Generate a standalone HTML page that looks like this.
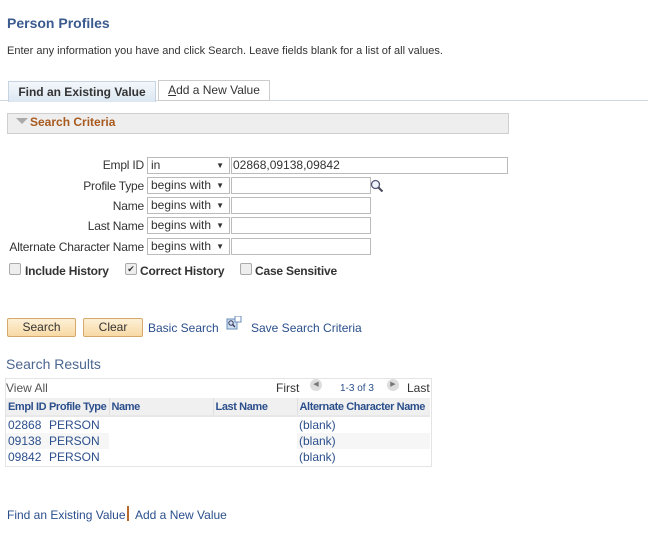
<!DOCTYPE html>
<html><head><meta charset="utf-8"><style>
body{margin:0;width:648px;height:534px;background:#fff;font-family:"Liberation Sans",Arial,sans-serif;position:relative;overflow:hidden;color:#333}
.a{position:absolute;white-space:nowrap}
.lbl{font-size:12px;color:#333;text-align:right;right:504px;letter-spacing:-0.2px}
.sel{position:absolute;left:147px;width:78px;height:15px;border:1px solid #bbb;background:#fff;font-size:12px;line-height:15px;padding-left:3px;box-sizing:content-box}
.sel:after{content:"▼";position:absolute;right:5px;top:0;font-size:8px}
.inp{position:absolute;left:231px;height:15px;border:1px solid #bbb;background:#fff;font-size:12px;line-height:15px;padding-left:1px}
.cb{position:absolute;width:10px;height:10px;border:1px solid #aaa;background:#eee;border-radius:2px}
.chk{font-size:12px;font-weight:bold;color:#333;letter-spacing:-0.2px}
.btn{position:absolute;top:318px;height:17px;border:1px solid #d4a96a;background:linear-gradient(#fdf0d6,#f8d9a4);border-radius:2px;font-size:12px;text-align:center;line-height:17px;color:#333}
.lnk{color:#2b4f8c;font-size:12px}
table{table-layout:fixed}
td{font-size:12px;padding:0 0 0 2px;height:16px;color:#2b4f8c;overflow:hidden;white-space:nowrap}
.h td{font-weight:bold;font-size:11px;letter-spacing:-0.4px;height:17px}
</style></head><body>
<div class="a" style="left:7px;top:15px;font-size:14px;font-weight:bold;color:#3b5b8f">Person Profiles</div>
<div class="a" style="left:7px;top:45px;font-size:11px;color:#333">Enter any information you have and click Search. Leave fields blank for a list of all values.</div>
<div class="a" style="left:0;top:100px;width:648px;height:1px;background:#cfd8e3"></div>
<div class="a" style="left:8px;top:81px;width:146px;height:20px;background:linear-gradient(#f3f7fb,#dce7f2);border:1px solid #c5d3e3;border-bottom:none;font-size:12px;font-weight:bold;color:#333;text-align:center;line-height:20px">Find an Existing Value</div>
<div class="a" style="left:158px;top:80px;width:110px;height:19px;background:#fff;border:1px solid #ccc;font-size:12px;color:#333;text-align:center;line-height:19px"><u>A</u>dd a New Value</div>
<div class="a" style="left:7px;top:113px;width:500px;height:19px;background:#eeeeee;border:1px solid #cfcfcf"></div>
<div class="a" style="left:16px;top:118px;width:0;height:0;border-left:6px solid transparent;border-right:6px solid transparent;border-top:6px solid #aaa"></div>
<div class="a" style="left:30px;top:115px;font-size:12px;font-weight:bold;color:#a85a1e">Search Criteria</div>

<div class="a lbl" style="top:158px">Empl ID</div>
<div class="sel" style="top:157px">in</div>
<div class="inp" style="top:157px;width:274px">02868,09138,09842</div>
<div class="a lbl" style="top:179px">Profile Type</div>
<div class="sel" style="top:177px">begins with</div>
<div class="inp" style="top:177px;width:137px"></div>
<svg class="a" style="left:370px;top:179px" width="14" height="14" viewBox="0 0 14 14"><circle cx="5.5" cy="5.5" r="4" fill="#eef4fa" stroke="#557" stroke-width="1.3"/><path d="M8.5 8.5L12.5 12.5" stroke="#445" stroke-width="2"/></svg>
<div class="a lbl" style="top:199px">Name</div>
<div class="sel" style="top:197px">begins with</div>
<div class="inp" style="top:197px;width:137px"></div>
<div class="a lbl" style="top:219px">Last Name</div>
<div class="sel" style="top:217px">begins with</div>
<div class="inp" style="top:217px;width:137px"></div>
<div class="a lbl" style="top:240px;letter-spacing:-0.2px">Alternate Character Name</div>
<div class="sel" style="top:238px">begins with</div>
<div class="inp" style="top:238px;width:137px"></div>

<div class="cb" style="left:9px;top:263px"></div><div class="a chk" style="left:25px;top:264px">Include History</div>
<div class="cb" style="left:125px;top:263px;font-size:9px;line-height:10px;text-align:center">✔</div><div class="a chk" style="left:140px;top:264px">Correct History</div>
<div class="cb" style="left:240px;top:263px"></div><div class="a chk" style="left:255px;top:264px">Case Sensitive</div>

<div class="btn" style="left:7px;width:67px">Search</div>
<div class="btn" style="left:83px;width:58px">Clear</div>
<div class="a lnk" style="left:148px;top:321px">Basic Search</div>
<svg class="a" style="left:226px;top:316px" width="16" height="14" viewBox="0 0 16 14"><rect x="1" y="3" width="10" height="10" fill="#cfe0f3" stroke="#6a8bb8"/><rect x="9" y="0" width="6" height="6" fill="#fff" stroke="#6a8bb8"/><circle cx="5" cy="7" r="2.2" fill="none" stroke="#335"/><path d="M6.5 8.5L9 11" stroke="#335" stroke-width="1.3"/></svg>
<div class="a lnk" style="left:251px;top:321px">Save Search Criteria</div>

<div class="a" style="left:6px;top:356px;font-size:14px;color:#4b6691">Search Results</div>
<div class="a" style="left:5px;top:378px;width:425px;height:87px;border:1px solid #e4e4e4;background:#fff"></div>
<div class="a" style="left:6px;top:381px;font-size:12px;color:#555">View All</div>
<div class="a" style="left:276px;top:381px;font-size:12px;color:#333">First</div>
<div class="a" style="left:310px;top:379px;width:12px;height:12px;border-radius:50%;background:#ddd;font-size:7px;line-height:12px;text-align:center;color:#777">◀</div>
<div class="a" style="left:340px;top:383px;font-size:10px;color:#2b4f8c">1-3 of 3</div>
<div class="a" style="left:387px;top:379px;width:12px;height:12px;border-radius:50%;background:#ddd;font-size:7px;line-height:12px;text-align:center;color:#777">▶</div>
<div class="a" style="left:407px;top:381px;font-size:12px;color:#333">Last</div>
<table class="a" style="left:6px;top:398px;border-collapse:collapse;width:424px">
<colgroup><col style="width:41px"><col style="width:62px"><col style="width:104px"><col style="width:84px"><col></colgroup>
<tr class="h" style="background:#f0f0f0"><td>Empl ID</td><td>Profile Type</td><td style="border-left:1px solid #e0e0e0">Name</td><td style="border-left:1px solid #e0e0e0">Last Name</td><td style="border-left:1px solid #e0e0e0">Alternate Character Name</td></tr>
<tr style="border-top:2px solid #e8e8e8"><td>02868</td><td>PERSON</td><td></td><td></td><td>(blank)</td></tr>
<tr><td style="background:#f6f6f6">09138</td><td style="background:#f6f6f6">PERSON</td><td></td><td></td><td style="background:#f6f6f6">(blank)</td></tr>
<tr><td>09842</td><td>PERSON</td><td></td><td></td><td>(blank)</td></tr>
</table>

<div class="a lnk" style="left:7px;top:508px">Find an Existing Value</div>
<div class="a" style="left:127px;top:506px;width:2px;height:15px;background:#b86a2a"></div>
<div class="a lnk" style="left:135px;top:508px">Add a New Value</div>
</body></html>
